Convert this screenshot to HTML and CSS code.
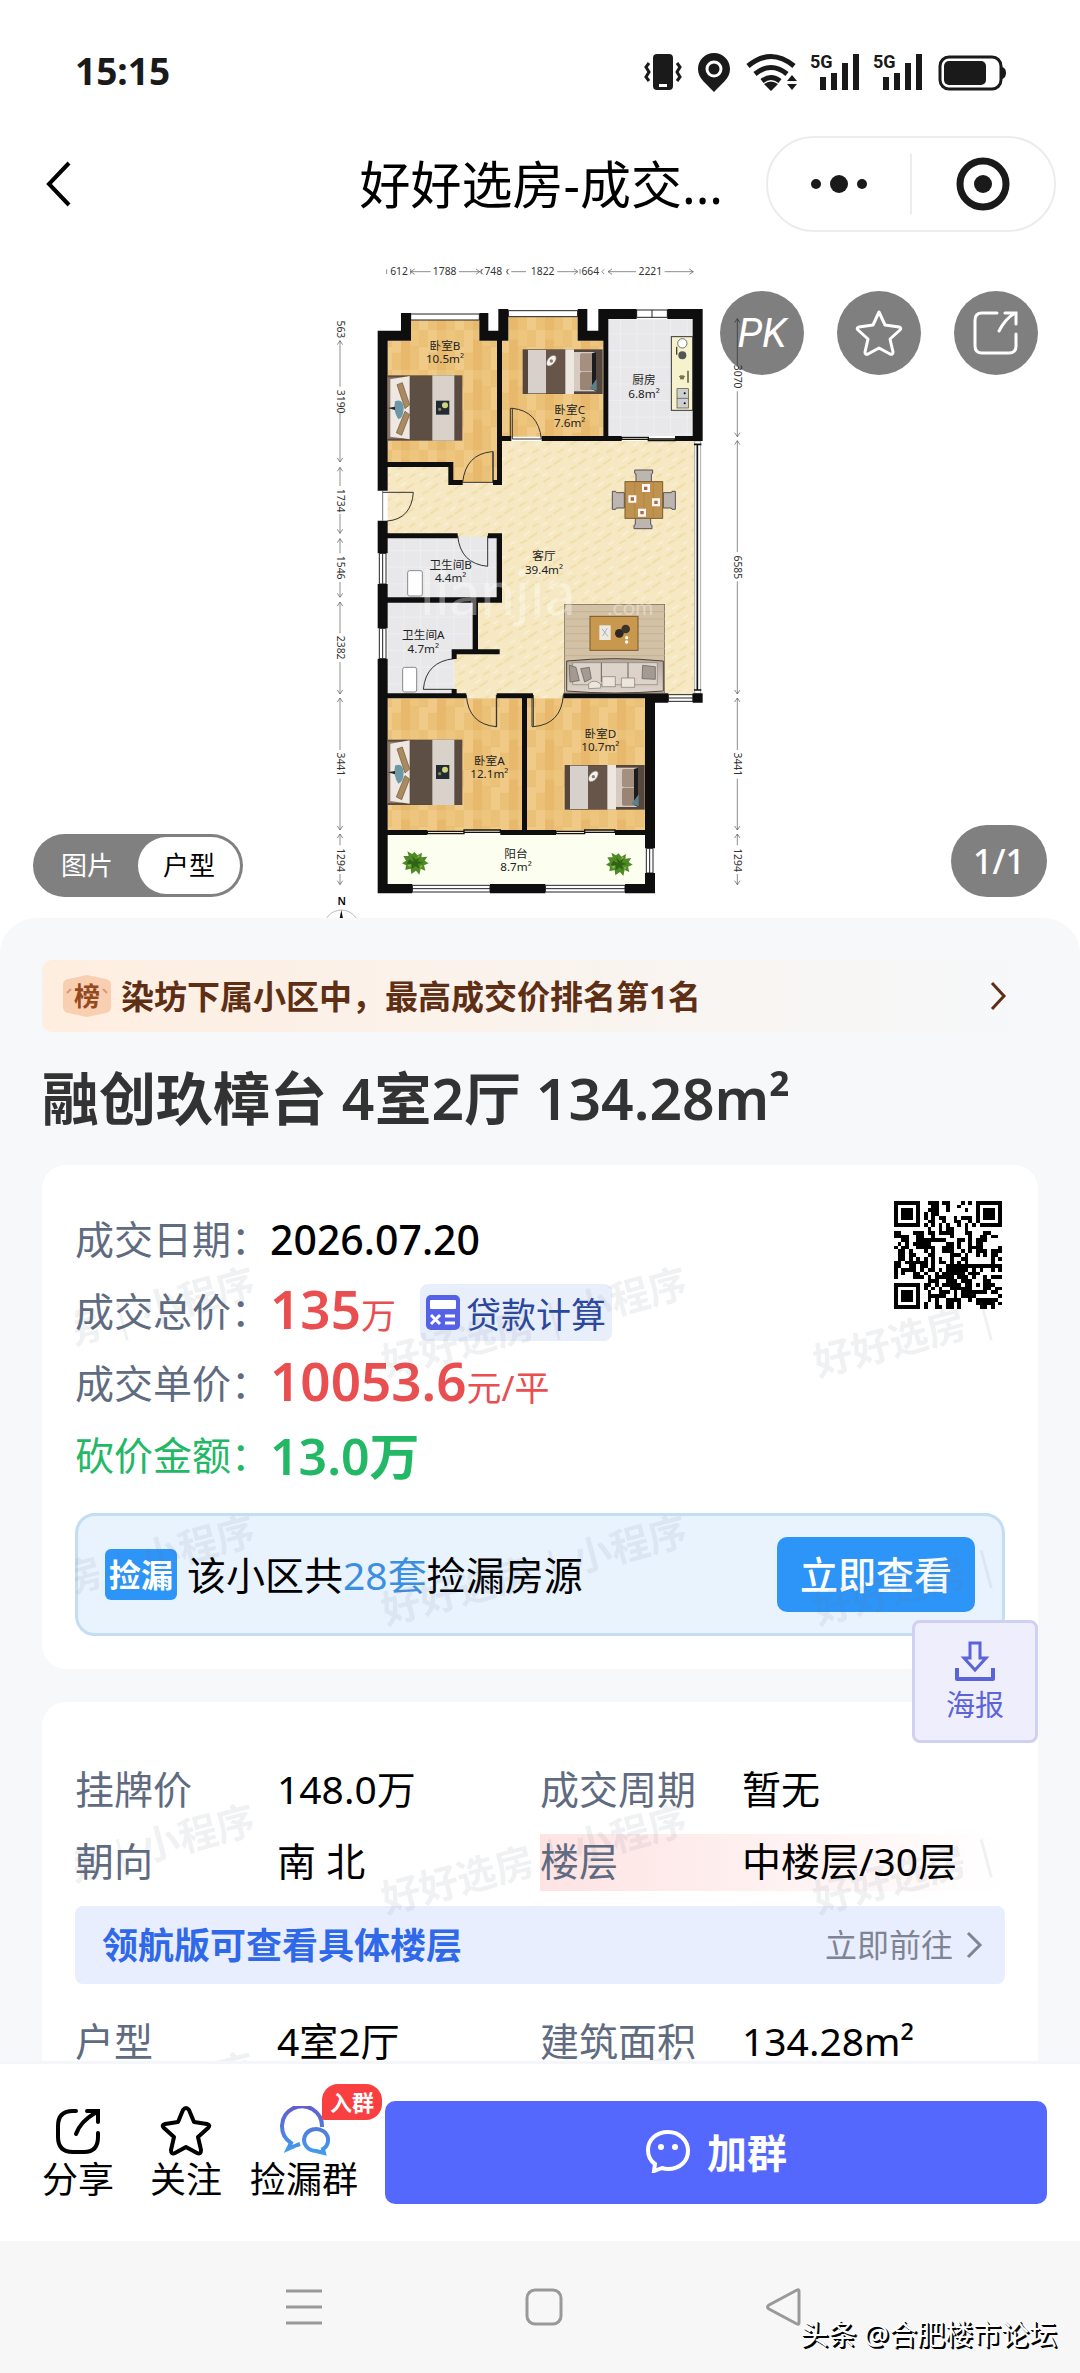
FILE: index.html
```html
<!DOCTYPE html>
<html lang="zh-CN">
<head>
  <meta charset="UTF-8" />
  <meta name="viewport" content="width=device-width, initial-scale=1.0"/>
  <title>好好选房-成交详情</title>
  <link rel="stylesheet" href="styles.css">
</head>
<body>
<div class="screen">

  <div class="status-bar">
    <span class="time">15:15</span>
    <svg class="status-icons" width="364" height="40" viewBox="643 52 364 40" fill="#1a1a1a">
      <!-- vibrate -->
      <rect x="653" y="54" width="20" height="36" rx="4"/>
      <rect x="659" y="84" width="8" height="3" fill="#fff"/>
      <path d="M649 63l-3 4 3 5-3 5 3 4M677 63l3 4-3 5 3 5-3 4" fill="none" stroke="#1a1a1a" stroke-width="3"/>
      <!-- location -->
      <path d="M714 53c-9 0-16 7-16 16 0 10 9 15 16 23 7-8 16-13 16-23 0-9-7-16-16-16z"/>
      <circle cx="714" cy="69" r="7" fill="none" stroke="#fff" stroke-width="3"/>
      <!-- wifi -->
      <g fill="none" stroke="#1a1a1a" stroke-width="5">
        <path d="M748 66q23-19 46 0M755 74q16-13 32 0M762 81q9-7 18 0"/>
      </g>
      <path d="M764 84q7-5 14 0l-7 7zM787 81l5-6 5 6zM787 84l5 6 5-6z"/>
      <!-- signals -->
      <text x="810" y="68" class="net">5G</text>
      <path d="M820 77h6v13h-6zM831 73h6v17h-6zM842 63h6v27h-6zM853 54h6v36h-6z"/>
      <text x="873" y="68" class="net">5G</text>
      <path d="M883 77h6v13h-6zM894 73h6v17h-6zM905 63h6v27h-6zM916 54h6v36h-6z"/>
      <!-- battery -->
      <rect x="940" y="57" width="61" height="32" rx="9" fill="none" stroke="#1a1a1a" stroke-width="3"/>
      <rect x="944" y="61" width="42" height="24" rx="5"/>
      <path d="M1002 67q4 1 4 6t-4 6z"/>
    </svg>
  </div>

  <header class="nav-bar">
    <button class="back" aria-label="返回">
      <svg width="28" height="48" viewBox="0 0 28 48"><path d="M25 3L5 24l20 21" fill="none" stroke="#000" stroke-width="4"/></svg>
    </button>
    <h1 class="nav-title">好好选房-成交...</h1>
    <div class="capsule">
      <button aria-label="更多">
        <svg width="60" height="24" viewBox="0 0 60 24" fill="#1a1a1a"><circle cx="7" cy="12" r="5"/><circle cx="30" cy="12" r="9"/><circle cx="53" cy="12" r="5"/></svg>
      </button>
      <button aria-label="关闭">
        <svg width="54" height="54" viewBox="0 0 54 54"><circle cx="27" cy="27" r="23" fill="none" stroke="#1a1a1a" stroke-width="7"/><circle cx="27" cy="27" r="9" fill="#1a1a1a"/></svg>
      </button>
    </div>
  </header>

  <main class="content">
    <section class="hero">
      <svg class="plan" width="440" height="668" viewBox="0 0 1320 2004">
        <defs>
          <pattern id="wood" width="108" height="120" patternUnits="userSpaceOnUse">
            <rect width="108" height="120" fill="#ebc077"/>
            <rect width="27" height="70" fill="#efc985"/>
            <rect x="27" y="30" width="27" height="90" fill="#e8b96c"/>
            <rect x="54" width="27" height="50" fill="#eec57d"/>
            <rect x="81" y="50" width="27" height="70" fill="#f0cb88"/>
            <path d="M0 70h27M27 30h27M54 50h27M81 50h27" stroke="#e2b263" stroke-width="1"/>
          </pattern>
          <pattern id="stone" width="74" height="74" patternUnits="userSpaceOnUse">
            <rect width="74" height="74" fill="#f5e8c2"/>
            <path d="M4 30l22-14M34 52l26-18M10 66l20-10M46 16l18-10" stroke="#f0dda6" stroke-width="5"/>
            <path d="M20 42l18-12M52 70l16-10M2 12l14-8" stroke="#faf1d6" stroke-width="5"/>
          </pattern>
          <pattern id="tile" width="50" height="50" patternUnits="userSpaceOnUse">
            <rect width="50" height="50" fill="#e8e8ea"/>
            <path d="M0 0h50M0 0v50" stroke="#f1f1f3" stroke-width="4"/>
          </pattern>
          <linearGradient id="sofa" x1="0" y1="0" x2="0" y2="1">
            <stop offset="0" stop-color="#b5a79a"/><stop offset="1" stop-color="#ded5cc"/>
          </linearGradient>
          <!-- bed, headboard on the left -->
          <g id="bed">
            <rect x="0" y="0" width="224" height="196" fill="#5a4a3f"/>
            <rect x="0" y="6" width="40" height="184" fill="#8b7a6c"/>
            <path d="M8 12l58-10v190l-58-8z" fill="#efe8e2"/>
            <path d="M28 28l16-6 22 66-14 12zM26 172l16 8 24-62-14-10z" fill="#a98a61" stroke="#6d5435" stroke-width="2"/>
            <path d="M22 78q24-10 26 20 0 30-16 34-16-24-10-54z" fill="#6b98a5"/>
            <path d="M0 98l22-4v10z" fill="#222"/>
            <rect x="68" y="3" width="66" height="190" fill="#5e4f45"/>
            <rect x="134" y="0" width="66" height="196" fill="#d9d2cb"/>
            <rect x="145" y="76" width="40" height="42" fill="#222a33"/>
            <circle cx="172" cy="90" r="9" fill="#cdd67b"/><circle cx="156" cy="102" r="5" fill="#8c8353"/>
          </g>
          <!-- single bed, headboard on the right -->
          <g id="single-bed">
            <rect width="240" height="134" fill="#55473d"/>
            <rect x="16" y="2" width="54" height="130" fill="#d8d0ca"/>
            <rect x="70" y="2" width="58" height="130" fill="#665548"/>
            <rect x="128" y="0" width="26" height="134" fill="#eee7df"/>
            <rect x="154" y="8" width="66" height="118" fill="#d5cbc2"/>
            <rect x="172" y="12" width="44" height="54" rx="5" fill="#a48f80"/>
            <rect x="172" y="68" width="44" height="54" rx="5" fill="#9a8575"/>
            <path d="M208 12l12-4v118l-12-6z" fill="#1c1c1f"/>
            <path d="M200 118l22-30v36z" fill="#5a808b"/>
            <ellipse cx="86" cy="34" rx="19" ry="11" transform="rotate(-50 86 34)" fill="#f4f1ee" stroke="#7c7069" stroke-width="2"/>
            <circle cx="86" cy="35" r="5" fill="#8d7c72"/>
          </g>
          <g id="plant" fill="#4f8a26">
            <path d="M0-30l8 10 14-8-2 14 18-2-8 12 12 8-14 6 4 16-14-6-4 18-10-12-14 10-2-16-16 4 2-14-12-6 12-8-8-14 16 0-4-14 14 8z"/>
            <path d="M-16-8l14 8-6-18 12 12 10-10-4 14 16 4-16 4 4 14-12-8-12 10 2-14-16-4z" fill="#2f6416"/>
            <path d="M-22 10l12-4-4 10zM10-20l6 2-8 8zM16 12l8-2-6 10z" fill="#8bbd4a"/>
          </g>
          <path id="chair" d="M0 0h54v10l-4 2v24h-46v-24l-4-2z" stroke="#575252" stroke-width="3"/>
        </defs>

        <!-- floors -->
        <path d="M203 573h920v772H203z" fill="url(#stone)"/>
        <path d="M203 272h69v-72h206v72h53v425H400v-55H203z" fill="url(#wood)"/>
        <path d="M546 272h19v-77h208v77h77v288H546z" fill="url(#wood)"/>
        <path d="M865 208h253v350H865z" fill="url(#tile)"/>
        <path d="M203 860h327v185H203z" fill="url(#tile)"/>
        <path d="M203 1055h255v150h-55v130H203z" fill="url(#tile)"/>
        <path d="M203 1345h403v400H203zM621 1345h355v400H621z" fill="url(#wood)"/>
        <path d="M203 1755h773v147H203z" fill="#fcfff0"/>

        <!-- windows and doors -->
        <g fill="#fff" stroke="#222" stroke-width="3">
          <path d="M272 192h206v18H272zM565 182h208v18H565zM950 180h92v22h-92zM996 180v22M178 910h20v92h-20zM188 910v92M178 1135h20v91h-20zM188 1135v91M277 1906h233v20H277zM277 1916h233M676 1906h239v20H676zM676 1916h239M979 1795h20v74h-20zM989 1795v74M1045 1334h74v20h-74zM1045 1344h74"/>
        </g>
        <path d="M1124 573h18v757h-18z" fill="#fff" stroke="#aaa" stroke-width="3"/>
        <path d="M1132 585v735M1122 583h22M1122 1320h22" stroke="#111" stroke-width="5"/>
        <path d="M188 722v90" stroke="#777" stroke-width="3"/>
        <g fill="none" stroke="#333" stroke-width="3">
          <path d="M188 727h92q-6 80-78 86M515 605q-78 8-87 92h91V605zM577 475q78 8 87 92h-87V475h-6v90M413 857q8 84 90 92v-92M403 1226q-85 8-93 92h93M439 1335q6 88 90 95v-95M730 1335q-6 88-90 95v-95"/>
          <path d="M519 605v92M530 1335v95h-4M636 1335v95h4"/>
        </g>
        <g fill="#f5e8c8" stroke="#111" stroke-width="4">
          <path d="M322 1744h110v7H322zM432 1740h109v7H432zM708 1744h86v7h-86zM794 1740h91v7h-91zM905 562h80v6h-80zM985 567h80v5h-80z"/>
        </g>

        <!-- walls -->
        <path fill="#0e0e0e" d="M173 242h30v480h-30zM173 812h30v98h-30zM173 1002h30v133h-30zM173 1226h30v704h-30zM173 242h100v30H173zM243 189h30v83h-30zM478 189h27v83h-27zM478 242h87v30h-87zM535 177h30v95h-30zM773 177h29v95h-29zM773 242h92v30h-92zM835 177h30v95h-30zM835 177h115v30H835zM1042 177h106v30h-106zM1118 177h30v396h-30zM531 260h15v445h-15zM850 260h15v300h-15zM546 558h28v15h-28zM665 558h240v15H665zM1065 558h83v15h-83zM203 636h197v15H203zM385 636h15v69h-15zM385 690h43v15h-43zM519 690h27v15h-27zM203 850h210v15H203zM504 850h42v15h-42zM530 850h16v208h-16zM203 1042h343v16H203zM458 1058h16v155h-16zM395 1198h144v15H395zM395 1198h15v29h-15zM395 1317h15v20h-15zM173 1330h266v15H173zM530 1330h109v15H530zM730 1330h315v15H730zM975 1330h70v28h-70zM1118 1330h30v28h-30zM606 1345h15v410h-15zM975 1345h30v450h-30zM975 1869h30v61h-30zM203 1740h119v15H203zM541 1740h167v15H541zM885 1740h90v15h-90zM173 1902h104v28H173zM510 1902h166v28H510zM915 1902h90v28h-90z"/>

        <!-- furniture -->
        <use href="#bed" x="203" y="376"/>
        <use href="#bed" x="203" y="1469"/>
        <use href="#single-bed" x="608" y="298"/>
        <use href="#single-bed" x="734" y="1545"/>
        <g>
          <rect x="1054" y="260" width="64" height="221" fill="#f6f3cc" stroke="#333" stroke-width="3"/>
          <circle cx="1087" cy="280" r="14" fill="#fff" stroke="#333" stroke-width="2"/>
          <circle cx="1087" cy="316" r="12" fill="#555"/>
          <path d="M1070 290v24M1104 362v36M1078 380h16" stroke="#444" stroke-width="4"/>
          <rect x="1080" y="376" width="12" height="12" fill="#7f7442"/>
          <rect x="1071" y="416" width="34" height="58" fill="#cfcfcf" stroke="#444" stroke-width="2"/>
          <path d="M1071 445h34" stroke="#444" stroke-width="2"/><circle cx="1094" cy="430" r="3"/><circle cx="1094" cy="460" r="3"/>
        </g>
        <g fill="#bdb5b0">
          <use href="#chair" x="944" y="660"/>
          <use href="#chair" transform="translate(996 836) rotate(180)"/>
          <use href="#chair" transform="translate(877 778) rotate(-90)"/>
          <use href="#chair" transform="translate(1066 724) rotate(90)"/>
          <rect x="915" y="695" width="113" height="110" fill="#c0924f" stroke="#7d5a2a" stroke-width="3"/>
          <path d="M944 696v108M972 696v108M1000 696v108" stroke="#ad803f" stroke-width="2"/>
          <path fill="#fbf7f2" d="M966 702h24v24h-24zM925 736h24v22h-24zM996 745h24v24h-24zM954 776h24v24h-24z"/>
          <path fill="#a5684a" d="M972 710h10v10h-10zM932 742h10v10h-10zM1003 752h10v10h-10zM961 783h10v10h-10z"/>
        </g>
        <g>
          <rect x="734" y="1063" width="300" height="266" fill="#d2c1a4" stroke="#6d5f4e" stroke-width="2"/>
          <path d="M734 1085h300M734 1107h300M734 1129h300M734 1151h300M734 1173h300M734 1195h300M734 1217h300" stroke="#c5b292" stroke-width="3"/>
          <rect x="810" y="1099" width="144" height="102" fill="#c8984f" stroke="#7b5727" stroke-width="3"/>
          <rect x="838" y="1126" width="34" height="44" fill="#ece9e2"/>
          <path d="M846 1136l18 24M862 1134l-14 24" stroke="#8d999c" stroke-width="2"/>
          <circle cx="898" cy="1150" r="13" fill="#2c2724"/><circle cx="917" cy="1137" r="13" fill="#3d322c"/>
          <circle cx="920" cy="1163" r="5" fill="#fff"/><circle cx="920" cy="1176" r="5" fill="#fff"/>
          <path d="M740 1233q144-14 290 0v90q-145 12-290 0z" fill="url(#sofa)" stroke="#4c443d" stroke-width="3"/>
          <path d="M758 1238h254v66H758z" fill="#ddd3ca" stroke="#8b7e72" stroke-width="2"/>
          <path d="M844 1238v58M924 1238v58" stroke="#6b6057" stroke-width="3"/>
          <path d="M748 1246l20 6 10 40-28 4zM782 1256l26-4 6 34-20 10zM968 1246l38 4v38l-40-2z" fill="#a39a93" stroke="#5f5750" stroke-width="2"/>
          <path d="M806 1300q18-14 36 2v12l-36 2zM846 1280h40v30h-40zM904 1284h40v28h-40z" fill="#ece5de" stroke="#7f746b" stroke-width="2"/>
        </g>
        <rect x="263" y="962" width="44" height="76" rx="6" fill="#fff" stroke="#888" stroke-width="3"/>
        <rect x="248" y="1252" width="42" height="74" rx="6" fill="#fff" stroke="#888" stroke-width="3"/>
        <use href="#plant" x="284" y="1836"/>
        <use href="#plant" x="896" y="1840"/>

        <!-- logo printed over the drawing -->
        <g class="plan-logo"><text x="300" y="1096" font-size="186">lianjia</text><text x="862" y="1096" font-size="66">.com</text></g>

        <!-- room names -->
        <g class="room">
          <text x="375" y="299">卧室B</text><text x="375" y="339">10.5m²</text>
          <text x="749" y="492">卧室C</text><text x="749" y="531">7.6m²</text>
          <text x="972" y="403">厨房</text><text x="972" y="443">6.8m²</text>
          <text x="392" y="957">卫生间B</text><text x="392" y="997">4.4m²</text>
          <text x="672" y="931">客厅</text><text x="672" y="971">39.4m²</text>
          <text x="310" y="1168">卫生间A</text><text x="310" y="1208">4.7m²</text>
          <text x="508" y="1544">卧室A</text><text x="508" y="1583">12.1m²</text>
          <text x="841" y="1465">卧室D</text><text x="841" y="1504">10.7m²</text>
          <text x="588" y="1824">阳台</text><text x="588" y="1862">8.7m²</text>
        </g>

        <!-- measures -->
        <g fill="none" stroke="#555" stroke-width="2">
          <path d="M200 58v14M284 57l-12 8 12 8M272 65h60M272 57v16M417 65h62M468 57l11 8-11 8M490 57l-10 8 10 8M484 57v16M568 57l-10 8 10 8M574 65h44M562 57v16M712 65h60M762 57l12 8-12 8M780 57v16M852 58l-6 7 6 7M876 57l-12 8 12 8M864 65h84M1034 65h86M1108 57l12 8-12 8"/>
          <path d="M60 272v138M52 284l8-12 8 12M60 486v150M52 624l8 12 8-12M52 664l8-12 8 12M60 652v56M60 792v58M52 838l8 12 8-12M52 878l8-12 8 12M60 866v44M60 996v44M52 1030l8 12 8-12M52 1068l8-12 8 12M60 1056v94M60 1236v96M52 1320l8 12 8-12M52 1356l8-12 8 12M60 1344v156M60 1586v154M52 1728l8 12 8-12M52 1764l8-12 8 12M60 1752v34M60 1872v32M52 1892l8 12 8-12"/>
          <path d="M1252 206v142M1244 218l8-12 8 12M1252 424v136M1244 548l8 12 8-12M1244 584l8-12 8 12M1252 572v334M1252 994v338M1244 1320l8 12 8-12M1244 1356l8-12 8 12M1252 1344v156M1252 1586v154M1244 1728l8 12 8-12M1244 1764l8-12 8 12M1252 1752v34M1252 1872v32M1244 1892l8 12 8-12"/>
        </g>
        <g class="measure">
          <text x="237" y="75">612</text><text x="374" y="75">1788</text><text x="520" y="75">748</text>
          <text x="668" y="75">1822</text><text x="811" y="75">664</text><text x="991" y="75">2221</text>
          <text transform="translate(52 238) rotate(90)">563</text>
          <text transform="translate(52 455) rotate(90)">3190</text>
          <text transform="translate(52 752) rotate(90)">1734</text>
          <text transform="translate(52 953) rotate(90)">1546</text>
          <text transform="translate(52 1193) rotate(90)">2382</text>
          <text transform="translate(52 1543) rotate(90)">3441</text>
          <text transform="translate(52 1830) rotate(90)">1294</text>
          <text transform="translate(1243 380) rotate(90)">3070</text>
          <text transform="translate(1243 952) rotate(90)">6585</text>
          <text transform="translate(1243 1543) rotate(90)">3441</text>
          <text transform="translate(1243 1830) rotate(90)">1294</text>
        </g>
        <text x="65" y="1964" class="north">N</text>
        <circle cx="64" cy="2032" r="52" fill="none" stroke="#999" stroke-width="2"/>
        <path d="M64 1980l8 40H56z" fill="#111"/>
      </svg>

      <div class="hero-actions">
        <button class="round pk">PK</button>
        <button class="round" aria-label="收藏">
          <svg width="50" height="50" viewBox="0 0 50 50"><path d="M25 4l6 13 14 2q3 1 1 3L36 31l3 13q0 3-3 2l-11-6-11 6q-3 1-3-2l3-13L4 22q-2-2 1-3l14-2 6-13z" fill="none" stroke="#fff" stroke-width="3" stroke-linejoin="round"/></svg>
        </button>
        <button class="round" aria-label="分享">
          <svg width="48" height="48" viewBox="0 0 48 48" fill="none" stroke="#fff" stroke-width="3" stroke-linecap="round"><path d="M25 4H10q-7 0-7 7v26q0 7 7 7h27q7 0 7-7V25M27 22Q33 10 43 4M33 4h11v11"/></svg>
        </button>
      </div>

      <div class="hero-tabs">
        <button>图片</button>
        <button class="active">户型</button>
      </div>
      <span class="hero-count">1/1</span>
    </section>

    <section class="sheet">
      <a href="#" class="rank">
        <span class="rank-badge">
          <svg width="48" height="42" viewBox="0 0 48 42"><path d="M24 0l19 4q5 1 5 6v22q0 5-5 6l-19 4-19-4q-5-1-5-6V10q0-5 5-6z" fill="#f9cfb2"/><path d="M4 18l4-4M44 18l-4-4" stroke="#d99a72" stroke-width="2"/></svg>
          <span>榜</span>
        </span>
        <span class="rank-text">染坊下属小区中，最高成交价排名第1名</span>
        <svg width="20" height="32" viewBox="0 0 20 32"><path d="M4 3l12 13L4 29" fill="none" stroke="#5e2f14" stroke-width="3"/></svg>
      </a>

      <h2 class="house-title">融创玖樟台 4室2厅 134.28m²</h2>

      <div class="card">
        <div class="deal">
          <dl class="deal-rows">
            <div><dt>成交日期：</dt><dd class="date">2026.07.20</dd></div>
            <div>
              <dt>成交总价：</dt>
              <dd class="price">135<small>万</small></dd>
              <dd>
                <button class="loan">
                  <svg width="34" height="35" viewBox="0 0 34 35"><rect width="34" height="35" rx="5" fill="#5561e6"/><rect x="4" y="5" width="26" height="9" rx="1" fill="#fff"/><path d="M5 20l9 9M14 20l-9 9M19 21h10M19 28h10" stroke="#fff" stroke-width="3"/></svg>
                  贷款计算
                </button>
              </dd>
            </div>
            <div><dt>成交单价：</dt><dd class="price">10053.6<small>元/平</small></dd></div>
            <div class="cut"><dt>砍价金额：</dt><dd class="price">13.0万</dd></div>
          </dl>
          <svg class="qr" width="108" height="108" viewBox="0 0 29 29" shape-rendering="crispEdges">
            <path stroke="#000" d="M0 .5h7m2 0h3m1 0h2m3 0h1m1 0h1m1 0h7M0 1.5h1m5 0h1m3 0h2m2 0h1m2 0h1m4 0h1m5 0h1M0 2.5h1m1 0h3m1 0h1m2 0h3m2 0h1m4 0h1m2 0h1m1 0h3m1 0h1M0 3.5h1m1 0h3m1 0h1m1 0h1m1 0h2m10 0h1m1 0h3m1 0h1M0 4.5h1m1 0h3m1 0h1m1 0h1m1 0h1m1 0h2m2 0h1m1 0h3m1 0h1m1 0h3m1 0h1M0 5.5h1m5 0h1m2 0h2m2 0h1m2 0h2m2 0h1m1 0h1m5 0h1M0 6.5h7m1 0h1m1 0h1m1 0h1m1 0h1m2 0h1m1 0h1m1 0h1m1 0h7M9 7.5h1m2 0h1m1 0h2m3 0h1M0 8.5h2m3 0h3m1 0h2m1 0h4m3 0h2m3 0h2M0 9.5h4m2 0h2m2 0h1m4 0h1m4 0h1m2 0h2m1 0h2M2 10.5h2m2 0h8m3 0h2m1 0h1m1 0h3M1 11.5h1m1 0h1m1 0h5m4 0h2m1 0h1m2 0h1m1 0h2M0 12.5h1m1 0h2m2 0h5m2 0h3m1 0h1m2 0h4m4 0h1M1 13.5h2m1 0h1m3 0h1m1 0h1m2 0h3m2 0h1m1 0h1m1 0h3m1 0h3M1 14.5h2m1 0h2m3 0h2m4 0h3m1 0h1m2 0h1m1 0h1m1 0h2M1 15.5h2m1 0h1m1 0h1m1 0h1m1 0h1m1 0h1m2 0h1m2 0h2m6 0h1m1 0h1M0 16.5h2m1 0h6m1 0h1m1 0h2m1 0h1m1 0h1m1 0h1m6 0h1M0 17.5h2m2 0h2m1 0h2m1 0h1m3 0h15M0 18.5h1m1 0h4m1 0h1m1 0h2m1 0h1m1 0h6m1 0h1m1 0h1m2 0h1m1 0h1M0 19.5h1m1 0h1m2 0h2m1 0h1m2 0h1m1 0h6m1 0h3M0 20.5h1m4 0h3m1 0h1m1 0h5m1 0h3m1 0h1m2 0h1m1 0h3M9 21.5h3m2 0h3m1 0h3m3 0h2M0 22.5h7m1 0h2m1 0h1m1 0h5m1 0h2m1 0h1m1 0h3M0 23.5h1m5 0h1m1 0h1m1 0h1m1 0h1m2 0h6m3 0h2m1 0h2M0 24.5h1m1 0h3m1 0h1m2 0h1m2 0h3m1 0h1m1 0h7m1 0h2M0 25.5h1m1 0h3m1 0h1m2 0h5m2 0h1m1 0h4m6 0h1M0 26.5h1m1 0h3m1 0h1m2 0h1m1 0h1m2 0h4m2 0h1m1 0h6M0 27.5h1m5 0h1m1 0h1m2 0h1m2 0h2m1 0h1m4 0h5m1 0h1M0 28.5h7m1 0h1m2 0h2m1 0h2m1 0h1m5 0h2m1 0h1"/>
          </svg>
        </div>
        <div class="bargain">
          <span class="bargain-tag">捡漏</span>
          <p>该小区共<em>28套</em>捡漏房源</p>
          <button>立即查看</button>
        </div>
        <svg class="watermark" aria-hidden="true">
          <defs>
            <pattern id="mark" x="-185" y="35" width="432" height="248" patternUnits="userSpaceOnUse">
              <text transform="translate(216 136) rotate(-15)"><tspan class="mark-bold">好好选房</tspan> | <tspan class="mark-bold">小程序</tspan></text>
            </pattern>
          </defs>
          <rect width="100%" height="100%" fill="url(#mark)"/>
        </svg>
      </div>

      <div class="card details">
        <dl class="grid">
          <div><dt>挂牌价</dt><dd>148.0万</dd></div>
          <div><dt>成交周期</dt><dd>暂无</dd></div>
          <div><dt>朝向</dt><dd>南 北</dd></div>
          <div class="floor"><dt>楼层</dt><dd>中楼层/30层</dd></div>
        </dl>
        <a href="#" class="upgrade">
          <strong>领航版可查看具体楼层</strong>
          <span>立即前往</span>
          <svg width="18" height="28" viewBox="0 0 18 28"><path d="M3 2l12 12L3 26" fill="none" stroke="#7f8495" stroke-width="3"/></svg>
        </a>
        <dl class="grid">
          <div><dt>户型</dt><dd>4室2厅</dd></div>
          <div><dt>建筑面积</dt><dd>134.28m²</dd></div>
        </dl>
        <svg class="watermark" aria-hidden="true"><rect width="100%" height="100%" fill="url(#mark)"/></svg>
      </div>

      <button class="poster">
        <svg width="40" height="42" viewBox="0 0 40 42" fill="none" stroke="#5b63d8" stroke-width="4"><path d="M2 28v11h36V28" stroke-linejoin="round"/><path d="M15 3h10v15h6L20 30 9 18h6z" stroke-width="3"/></svg>
        海报
      </button>
    </section>
  </main>

  <footer class="action-bar">
    <button class="action">
      <svg width="50" height="50" viewBox="0 0 50 50" fill="none" stroke="#000" stroke-width="4" stroke-linecap="round"><path d="M23 5h-3Q5 5 5 20v11q0 15 15 15h11q14 0 14-15v-4M23 28Q27 16 42 7"/><path d="M34 5h11v11" stroke-linejoin="miter"/></svg>
      分享
    </button>
    <button class="action">
      <svg width="52" height="50" viewBox="0 0 52 50"><path d="M29 4l5 12 13 2q4 1 1 4l-10 9 3 13q0 5-4 3l-11-6-11 6q-4 2-4-3l3-13L4 22q-3-3 1-4l13-2 5-12q3-4 6 0z" fill="none" stroke="#000" stroke-width="4" stroke-linejoin="round"/></svg>
      关注
    </button>
    <button class="action">
      <svg width="52" height="50" viewBox="0 0 52 50" fill="none" stroke="url(#chat)" stroke-width="4">
        <defs><linearGradient id="chat" gradientUnits="userSpaceOnUse" x1="0" y1="2" x2="0" y2="48"><stop offset="0" stop-color="#6060cf"/><stop offset="1" stop-color="#3f9df0"/></linearGradient></defs>
        <path d="M44 21A20 20 0 1 0 13 37l-3 6 9-4 3-1"/>
        <path d="M45 43A12 11 0 1 0 38 45l8 2z"/>
      </svg>
      捡漏群
      <span class="badge">入群</span>
    </button>
    <button class="join">
      <svg width="46" height="44" viewBox="0 0 46 44"><path d="M23 3C11 3 3 11 3 21q0 9 7 14l-1 7 8-3q3 1 6 1c12 0 20-8 20-18S35 3 23 3z" fill="none" stroke="#fff" stroke-width="4"/><circle cx="16" cy="18" r="3" fill="#fff"/><circle cx="30" cy="18" r="3" fill="#fff"/></svg>
      加群
    </button>
  </footer>

  <nav class="system-nav">
    <button aria-label="最近任务"><svg width="38" height="38" viewBox="0 0 38 38"><path d="M1 3h36M1 19h36M1 35h36" stroke="#999" stroke-width="3"/></svg></button>
    <button aria-label="主页"><svg width="38" height="38" viewBox="0 0 38 38"><rect x="2" y="2" width="34" height="34" rx="8" fill="none" stroke="#999" stroke-width="3"/></svg></button>
    <button aria-label="后退"><svg width="38" height="38" viewBox="0 0 38 38"><path d="M34 3v32q0 2-2 1L4 21q-3-2 0-4L32 2q2-1 2 1z" fill="none" stroke="#999" stroke-width="3"/></svg></button>
    <span class="source">头条 @合肥楼市论坛</span>
  </nav>

</div>
</body>
</html>
```
FILE: styles.css
```css
* {
  box-sizing: border-box;
}

body {
  margin: 0;
  background: #ffffff;
  color: #000;
  font-family: "Noto Sans", "Noto Sans CJK SC", sans-serif;
}

h1, h2, p, dl, dd {
  margin: 0;
}

button {
  border: none;
  padding: 0;
  background: none;
  color: inherit;
  font-family: inherit;
  cursor: pointer;
}

a {
  text-decoration: none;
}

svg {
  display: block;
  flex-shrink: 0;
}

.screen {
  display: flex;
  flex-direction: column;
  height: 100vh;
  overflow: hidden;
}

/* top */
.status-bar {
  display: flex;
  justify-content: space-between;
  align-items: center;
  height: 118px;
  padding: 26px 73px 0 75px;
  flex-shrink: 0;
}

.time {
  padding-bottom: 3px;
  font-size: 37px;
  font-weight: 700;
  color: #1a1a1a;
}

.net {
  font: 700 18px Roboto, sans-serif;
}

.nav-bar {
  display: flex;
  align-items: center;
  height: 132px;
  padding: 0 24px 0 44px;
  flex-shrink: 0;
}

.nav-title {
  flex: 1;
  text-align: right;
  font-size: 51px;
  line-height: 72px;
  font-weight: 400;
}

.capsule {
  display: flex;
  width: 290px;
  height: 96px;
  margin-left: 43px;
  border: 2px solid #ececec;
  border-radius: 48px;
  align-items: center;
}

.capsule button {
  flex: 1;
  display: flex;
  justify-content: center;
  align-items: center;
  height: 60px;
}

.capsule button + button {
  border-left: 2px solid #ececec;
}

.content {
  flex: 1;
  min-height: 0;
  overflow: hidden;
  border-bottom: 3px solid #f4f6f9;
}

/* floor plan */
.hero {
  position: relative;
  display: flex;
  justify-content: center;
}

.room {
  font-size: 35px;
  text-anchor: middle;
  fill: #222;
}

.measure {
  font-size: 31px;
  text-anchor: middle;
  fill: #333;
}

.north {
  font-size: 32px;
  font-weight: 600;
  text-anchor: middle;
}

.plan-logo {
  font-family: Lato, sans-serif;
  fill: #fff;
  opacity: 0.35;
}

.hero-actions {
  position: absolute;
  top: 41px;
  right: 42px;
  display: flex;
  gap: 33px;
}

.round {
  display: flex;
  justify-content: center;
  align-items: center;
  width: 84px;
  height: 84px;
  border-radius: 50%;
  background: rgba(0, 0, 0, 0.5);
  color: #fff;
}

.pk {
  font: italic 400 40px Roboto, sans-serif;
}

.hero-tabs {
  position: absolute;
  left: 33px;
  bottom: 21px;
  display: flex;
  padding: 3px;
  border-radius: 32px;
  background: #808080;
}

.hero-tabs button {
  width: 102px;
  height: 57px;
  padding-bottom: 3px;
  border-radius: 29px;
  color: #fff;
  font-size: 26px;
}

.hero-tabs .active {
  background: #fff;
  color: #000;
}

.hero-count {
  position: absolute;
  right: 33px;
  bottom: 21px;
  width: 96px;
  border-radius: 36px;
  background: #808080;
  color: #fff;
  font-size: 34px;
  font-weight: 500;
  line-height: 72px;
  text-align: center;
}

/* sheet */
.sheet {
  position: relative;
  padding: 42px;
  border-radius: 36px 36px 0 0;
  background: #f6f8fa;
}

.rank {
  display: flex;
  align-items: center;
  gap: 10px;
  height: 72px;
  padding: 0 30px 0 21px;
  border-radius: 10px;
  background: linear-gradient(90deg, #feeee0, #f6f8fa);
  color: #5e2f14;
}

.rank-badge {
  display: grid;
  place-items: center;
  font-size: 26px;
  font-weight: 700;
  line-height: 40px;
  color: #94491f;
}

.rank-badge > * {
  grid-area: 1 / 1;
}

.rank-text {
  flex: 1;
  padding-bottom: 3px;
  font-size: 33px;
  font-weight: 700;
}

.house-title {
  font-size: 57px;
  font-weight: 600;
  line-height: 133px;
  color: #333;
}

.card {
  position: relative;
  margin-bottom: 33px;
  padding: 36px 33px 33px;
  border-radius: 24px;
  background: #fff;
}

.deal {
  display: flex;
  justify-content: space-between;
}

.deal-rows {
  padding-top: 3px;
}

.deal-rows > div {
  display: flex;
  align-items: center;
  height: 72px;
}

dt {
  padding-bottom: 4px;
  font-size: 39px;
  line-height: 57px;
  color: #5f6b80;
}

.date {
  padding-bottom: 2px;
  font-size: 41px;
  font-weight: 500;
}

.price {
  color: #e94f50;
  font-size: 53px;
  font-weight: 600;
  line-height: 72px;
}

.price small {
  font-size: 35px;
  font-weight: 400;
}

.cut dt,
.cut .price {
  color: #23b866;
}

.cut .price {
  font-size: 50px;
}

.loan {
  display: flex;
  align-items: center;
  gap: 6px;
  height: 57px;
  margin-left: 24px;
  padding: 0 6px;
  border-radius: 8px;
  background: #e9eefb;
  color: #2a489c;
  font-size: 35px;
}

.qr {
  margin-right: 3px;
}

.bargain {
  display: flex;
  align-items: center;
  height: 123px;
  margin-top: 21px;
  padding: 0 27px;
  border: 3px solid #c3ddf2;
  border-radius: 20px;
  background: #e8f3fe;
}

.bargain-tag {
  width: 72px;
  margin-right: 10px;
  border-radius: 6px;
  background: #2e95f8;
  color: #fff;
  font-size: 32px;
  font-weight: 700;
  line-height: 51px;
  text-align: center;
}

.bargain p {
  flex: 1;
  padding-bottom: 4px;
  font-size: 39px;
}

.bargain em {
  font-style: normal;
  color: #3c8fe0;
}

.bargain button {
  width: 198px;
  height: 75px;
  padding-bottom: 4px;
  border-radius: 10px;
  background: #2e95f8;
  color: #fff;
  font-size: 38px;
  font-weight: 500;
}

.watermark {
  position: absolute;
  top: 0;
  left: 33px;
  width: calc(100% - 66px);
  height: 100%;
  pointer-events: none;
}

#mark text {
  font-size: 39px;
  text-anchor: middle;
  fill: #5a6478;
  fill-opacity: 0.09;
}

.mark-bold {
  font-weight: 700;
}

.details {
  padding-top: 52px;
}

.grid {
  display: grid;
  grid-template-columns: 1fr 1fr;
}

.grid > div {
  display: flex;
  align-items: center;
  height: 57px;
  margin: 8px 0 7px;
}

.grid dt {
  width: 202px;
}

.grid dd {
  padding-bottom: 4px;
  font-size: 39px;
  line-height: 57px;
}

.floor {
  background: linear-gradient(90deg, #fee3e3, #ffffff);
}

.upgrade {
  display: flex;
  align-items: center;
  gap: 12px;
  height: 78px;
  margin: 8px 0 22px;
  padding: 0 22px 0 27px;
  border-radius: 8px;
  background: #e9eefe;
  color: #7f8495;
  font-size: 32px;
}

.upgrade strong,
.upgrade span {
  padding-bottom: 4px;
}

.upgrade strong {
  flex: 1;
  color: #2f68e8;
  font-size: 36px;
}

.poster {
  position: absolute;
  top: 702px;
  right: 42px;
  display: flex;
  flex-direction: column;
  align-items: center;
  justify-content: center;
  gap: 2px;
  width: 126px;
  height: 123px;
  padding-top: 3px;
  border: 3px solid #d0d0f2;
  border-radius: 8px;
  background: #eeeefc;
  color: #5b63d8;
  font-size: 29px;
  line-height: 42px;
}

/* bottom */
.action-bar {
  display: flex;
  align-items: center;
  height: 177px;
  padding: 0 33px 0 42px;
  flex-shrink: 0;
}

.action {
  position: relative;
  display: flex;
  flex-direction: column;
  align-items: center;
  margin-top: 5px;
  margin-right: 36px;
  font-size: 36px;
  line-height: 48px;
}

.action:nth-child(2) {
  margin-right: 28px;
}

.badge {
  position: absolute;
  top: -22px;
  right: -24px;
  width: 60px;
  border-radius: 16px 16px 16px 2px;
  background: #f93f3f;
  color: #fff;
  font-size: 22px;
  font-weight: 700;
  line-height: 36px;
}

.join {
  flex: 1;
  display: flex;
  justify-content: center;
  align-items: center;
  gap: 16px;
  height: 103px;
  margin-left: -9px;
  padding-bottom: 3px;
  border-radius: 10px;
  background: #5568fd;
  color: #fff;
  font-size: 40px;
  font-weight: 700;
}

.system-nav {
  position: relative;
  display: flex;
  justify-content: center;
  gap: 202px;
  height: 132px;
  padding-left: 8px;
  background: #f7f7f7;
  flex-shrink: 0;
}

.source {
  position: absolute;
  right: 23px;
  bottom: 19px;
  color: #fff;
  font-size: 28px;
  line-height: 40px;
  text-shadow: 2px 2px 0 #000, 1px 1px 0 #000;
}
```
